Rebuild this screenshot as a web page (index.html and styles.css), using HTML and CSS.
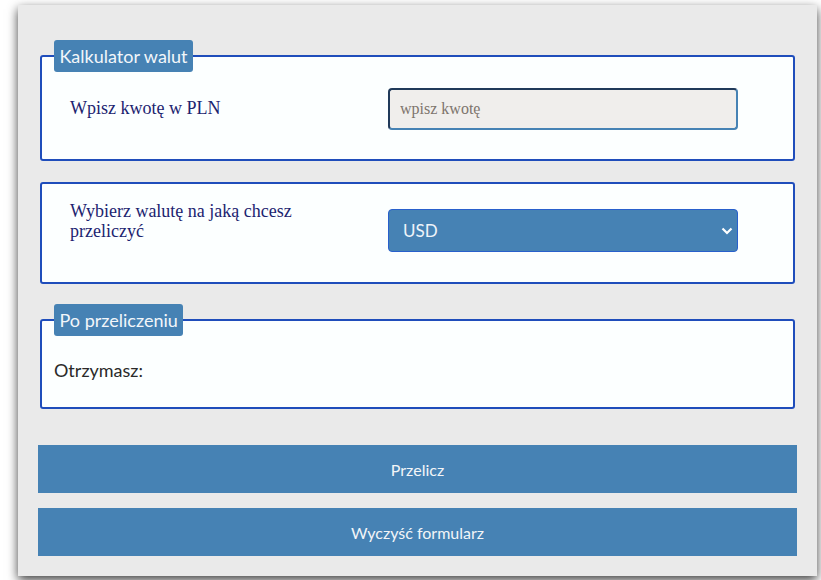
FILE: index.html
```html
<!DOCTYPE html>
<html lang="pl">
<head>
<meta charset="utf-8">
<title>Kalkulator walut</title>
<link rel="stylesheet" href="styles.css">
</head>
<body>
<main class="card">
  <form class="calc">
    <fieldset class="box box-first">
      <legend class="box-legend">Kalkulator walut</legend>
      <div class="row row-amount">
        <label class="row-label" for="amount">Wpisz kwotę w PLN</label>
        <input class="amount" id="amount" type="text" placeholder="wpisz kwotę">
      </div>
    </fieldset>

    <fieldset class="box box-second">
      <div class="row row-currency">
        <label class="row-label" for="currency">Wybierz walutę na jaką chcesz przeliczyć</label>
        <div class="select-wrap">
          <select class="currency" id="currency">
            <option>USD</option>
            <option>EUR</option>
            <option>GBP</option>
          </select>
          <svg class="chevron" width="12" height="8" viewBox="0 0 12 8"><path d="M1.5 1.5 L6 6 L10.5 1.5" fill="none" stroke="#ffffff" stroke-width="2.2"/></svg>
        </div>
      </div>
    </fieldset>

    <fieldset class="box box-third">
      <legend class="box-legend">Po przeliczeniu</legend>
      <p class="result">Otrzymasz:</p>
    </fieldset>

    <div class="actions">
      <button type="button" class="btn">Przelicz</button>
      <button type="reset" class="btn">Wyczyść formularz</button>
    </div>
  </form>
</main>
</body>
</html>
```

FILE: styles.css
```css
html, body {
  margin: 0;
  padding: 0;
  background: #ffffff;
}

body {
  width: 821px;
  height: 580px;
  overflow: hidden;
}

.card {
  box-sizing: border-box;
  width: 799px;
  margin: 5px 0 0 18px;
  padding: 35px 20px 20px;
  background: #eaeaea;
  box-shadow: 0 4px 10px rgba(0, 0, 0, 0.75);
}

.calc {
  margin: 0;
}

.box {
  margin: 0 2px;
  padding: 0 12px;
  background: #fcffff;
  border: 2px solid #1f4dbb;
  border-radius: 3px;
  min-width: 0;
}

.box-second {
  margin-top: 21px;
}

.box-third {
  margin-top: 20px;
}

.box-legend {
  padding: 4px 5.5px;
  background: #4682b4;
  color: #f2f6fa;
  font-family: "Lato", "Liberation Sans", sans-serif;
  font-size: 18px;
  line-height: 24px;
  border-radius: 3px;
}

.row {
  display: flex;
  align-items: flex-start;
  padding-left: 16px;
}

.row-amount {
  margin: 16px 0 29px;
}

.row-currency {
  margin: 17px 0 30px;
}

.row-label {
  flex: 0 0 260px;
  margin-right: 58px;
  color: #1c2470;
  font-family: "Liberation Serif", "Times New Roman", serif;
  font-size: 18px;
  line-height: 20px;
}

.row-amount .row-label {
  padding-top: 10px;
}

.amount {
  box-sizing: border-box;
  width: 350px;
  height: 42px;
  margin: 0;
  padding: 0 10px;
  background: #f0eeec;
  border: 2px solid #4682b4;
  border-top-color: #203a5a;
  border-left-color: #203a5a;
  border-radius: 4px;
  font-family: "Liberation Serif", "Times New Roman", serif;
  font-size: 16px;
  color: #333;
  outline: none;
}

.amount::placeholder {
  color: #7d746c;
}

.select-wrap {
  position: relative;
  width: 350px;
  margin-top: 8px;
}

.currency {
  box-sizing: border-box;
  display: block;
  width: 350px;
  height: 43px;
  margin: 0;
  padding: 0 14px;
  background: #4682b4;
  border: 1px solid #2860cc;
  border-radius: 4px;
  color: #eef4fa;
  font-family: "Lato", "Liberation Sans", sans-serif;
  font-size: 17px;
  -webkit-appearance: none;
  appearance: none;
  outline: none;
}

.chevron {
  position: absolute;
  right: 5px;
  top: 18px;
  pointer-events: none;
}

.result {
  margin: 23px 0 26px;
  color: #2a2a2a;
  font-family: "Lato", "Liberation Sans", sans-serif;
  font-size: 18px;
  line-height: 22px;
}

.actions {
  display: flex;
  flex-direction: column;
  gap: 15px;
  margin-top: 36px;
}

.btn {
  display: block;
  width: 100%;
  height: 48px;
  margin: 0;
  padding: 0;
  border: none;
  border-radius: 0;
  background: #4682b4;
  color: #f2f5f8;
  font-family: "Lato", "Liberation Sans", sans-serif;
  font-size: 16px;
}
```
